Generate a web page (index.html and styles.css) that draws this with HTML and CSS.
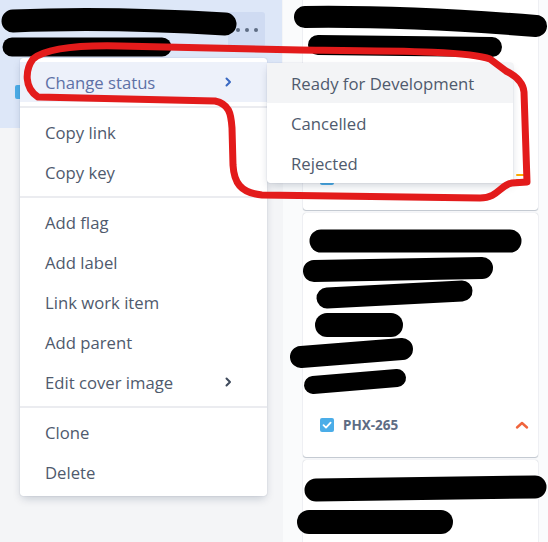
FILE: index.html
```html
<!DOCTYPE html>
<html lang="en">
<head>
<meta charset="utf-8">
<title>Board card actions</title>
<link rel="stylesheet" href="styles.css">
</head>
<body>
<div class="board">
  <div class="col col-left">
    <div class="card card-selected">
      <div class="card-top">
        <button class="more" aria-label="More actions"><span></span><span></span><span></span></button>
      </div>
      <div class="card-mid">
        <span class="check check-partial"></span>
      </div>
    </div>
  </div>
  <div class="col col-right">
    <div class="card card-1">
      <div class="card-foot">
        <span class="check"><svg viewBox="0 0 14 14" width="14" height="14"><path d="M3.5 7.2 L6 9.6 L10.6 4.6" fill="none" stroke="#fff" stroke-width="1.8" stroke-linecap="round" stroke-linejoin="round"/></svg></span>
        <span class="key">PHX-266</span>
        <span class="prio"><svg viewBox="0 0 16 16" width="16" height="16"><rect x="2" y="4" width="12" height="2" rx="1" fill="#ffab00"/><rect x="2" y="9" width="12" height="2" rx="1" fill="#ffab00"/></svg></span>
      </div>
    </div>
    <div class="card card-2">
      <div class="card-foot">
        <span class="check"><svg viewBox="0 0 14 14" width="14" height="14"><path d="M3.5 7.2 L6 9.6 L10.6 4.6" fill="none" stroke="#fff" stroke-width="1.8" stroke-linecap="round" stroke-linejoin="round"/></svg></span>
        <span class="key">PHX-265</span>
        <span class="prio"><svg viewBox="0 0 16 16" width="16" height="16"><path d="M3 10.5 L8 6 L13 10.5" fill="none" stroke="#f0643c" stroke-width="2.4" stroke-linecap="round" stroke-linejoin="round"/></svg></span>
      </div>
    </div>
    <div class="card card-3"></div>
  </div>
</div>

<div class="menu">
  <div class="group">
    <div class="item item-active"><span>Change status</span><svg class="chev" viewBox="0 0 8 10" width="8" height="10"><path d="M2.5 1.5 L6 5 L2.5 8.5" fill="none" stroke="currentColor" stroke-width="2" stroke-linecap="round" stroke-linejoin="round"/></svg></div>
  </div>
  <div class="group">
    <div class="item"><span>Copy link</span></div>
    <div class="item"><span>Copy key</span></div>
  </div>
  <div class="group">
    <div class="item"><span>Add flag</span></div>
    <div class="item"><span>Add label</span></div>
    <div class="item"><span>Link work item</span></div>
    <div class="item"><span>Add parent</span></div>
    <div class="item"><span>Edit cover image</span><svg class="chev" viewBox="0 0 8 10" width="8" height="10"><path d="M2.5 1.5 L6 5 L2.5 8.5" fill="none" stroke="currentColor" stroke-width="2" stroke-linecap="round" stroke-linejoin="round"/></svg></div>
  </div>
  <div class="group">
    <div class="item"><span>Clone</span></div>
    <div class="item"><span>Delete</span></div>
  </div>
</div>

<div class="submenu">
  <div class="sub-item sub-active">Ready for Development</div>
  <div class="sub-item">Cancelled</div>
  <div class="sub-item">Rejected</div>
</div>

<svg class="marks" viewBox="0 0 548 542" width="548" height="542" aria-hidden="true">
  <g fill="none" stroke="#000" stroke-linecap="round">
    <path d="M13 21 C80 18 160 20 225 24" stroke-width="23"/>
    <path d="M12 47 L162 47" stroke-width="19"/>
    <path d="M305 17 C380 16 460 20 536 26" stroke-width="22"/>
    <path d="M318 45 L492 47" stroke-width="20"/>
    <path d="M321 241 L510 241" stroke-width="23"/>
    <path d="M314 271 L482 268" stroke-width="22"/>
    <path d="M327 298 L462 291" stroke-width="21"/>
    <path d="M327 325 L391 325" stroke-width="24"/>
    <path d="M301 357 L402 349" stroke-width="22"/>
    <path d="M313 385 L397 378" stroke-width="18"/>
    <path d="M316 490 L535 487" stroke-width="23"/>
    <path d="M309 522 L441 522" stroke-width="24"/>
  </g>
  <path d="M33 59 C25 70 24 88 38 97 L215 101 C229 104 231 113 232 128 L233 165 C234 182 240 193 262 195 L480 198 C498 198 500 185 512 183 L527 182 L524 92 C523 82 516 76 506 71 L490 59 C470 51 400 51 300 50 L120 46 C75 45 45 49 33 59 Z" fill="none" stroke="#e31b1b" stroke-width="7" stroke-linejoin="round"/>
</svg>
</body>
</html>
```

FILE: styles.css
```css
* { box-sizing: border-box; }
html, body { margin: 0; padding: 0; }
body {
  width: 548px;
  height: 542px;
  overflow: hidden;
  background: #fafbfc;
  font-family: "Open Sans", "Noto Sans", sans-serif;
  position: relative;
}
.board {
  display: flex;
  height: 542px;
}
.col-left {
  width: 283px;
  background: #f4f5f7;
}
.col-right {
  flex: 1;
  padding: 0 10px 0 20px;
  display: flex;
  flex-direction: column;
  gap: 3px;
}
.card {
  flex-shrink: 0;
  background: #fff;
  border-radius: 3px;
  box-shadow: 0 1px 1px rgba(9, 30, 66, 0.22), 0 0 1px rgba(9, 30, 66, 0.3);
  display: flex;
  flex-direction: column;
}
.card-selected {
  background: #dde7f8;
  width: 282px;
  height: 138px;
  margin-top: -10px;
  box-shadow: none;
  border-radius: 0 0 3px 0;
}
.card-top {
  display: flex;
  justify-content: flex-end;
  padding: 22px 17px 0 0;
}
.more {
  width: 37px;
  height: 35px;
  border: 0;
  padding: 0;
  border-radius: 3px;
  background: #cfdbf2;
  display: flex;
  align-items: center;
  justify-content: center;
  gap: 5px;
}
.more span {
  width: 4px;
  height: 4px;
  border-radius: 50%;
  background: #5e6c84;
}
.card-mid {
  padding: 38px 0 0 15px;
}
.check-partial {
  display: block;
  width: 16px;
  height: 18px;
  border-radius: 2px;
  background: #4b8fd8;
}
.card-1 { margin-top: -10px; height: 220px; }
.card-2 { height: 244px; }
.card-3 { height: 100px; }
.card-foot {
  margin-top: auto;
  display: flex;
  align-items: center;
  height: 28px;
  margin-bottom: 18px;
  padding: 0 8px 0 17px;
}
.check {
  width: 14px;
  height: 14px;
  border-radius: 2px;
  background: #4bade8;
  display: flex;
}
.key {
  margin-left: 9px;
  font-family: "Noto Sans", "Open Sans", sans-serif;
  font-weight: 700;
  font-size: 13.5px;
  color: #5e6c84;
}
.prio {
  margin-left: auto;
  display: flex;
}
.menu {
  position: absolute;
  left: 20px;
  top: 58px;
  width: 247px;
  background: #fff;
  border-radius: 3px;
  box-shadow: 0 4px 10px -2px rgba(9, 30, 66, 0.22), 0 0 1px rgba(9, 30, 66, 0.3);
}
.group {
  padding: 4px 0;
}
.group + .group {
  border-top: 2px solid #ebecf0;
}
.item {
  height: 40px;
  display: flex;
  align-items: center;
  justify-content: space-between;
  padding: 0 35px 0 25px;
  font-size: 16.7px;
  color: #4f5a6d;
}
.item .chev { color: #3f4a5c; }
.item-active {
  background: #edf1fa;
  color: #5d70a6;
}
.item-active .chev { color: #3a69c2; }
.submenu {
  position: absolute;
  left: 267px;
  top: 63px;
  width: 246px;
  background: #fff;
  border-radius: 3px;
  box-shadow: 0 4px 10px -2px rgba(9, 30, 66, 0.22), 0 0 1px rgba(9, 30, 66, 0.3);
}
.sub-item {
  height: 40px;
  display: flex;
  align-items: center;
  padding: 0 16px 0 24px;
  font-size: 16.7px;
  color: #4f5a6d;
}
.sub-active {
  background: #f3f4f6;
}
.marks {
  position: absolute;
  left: 0;
  top: 0;
  pointer-events: none;
}
```
